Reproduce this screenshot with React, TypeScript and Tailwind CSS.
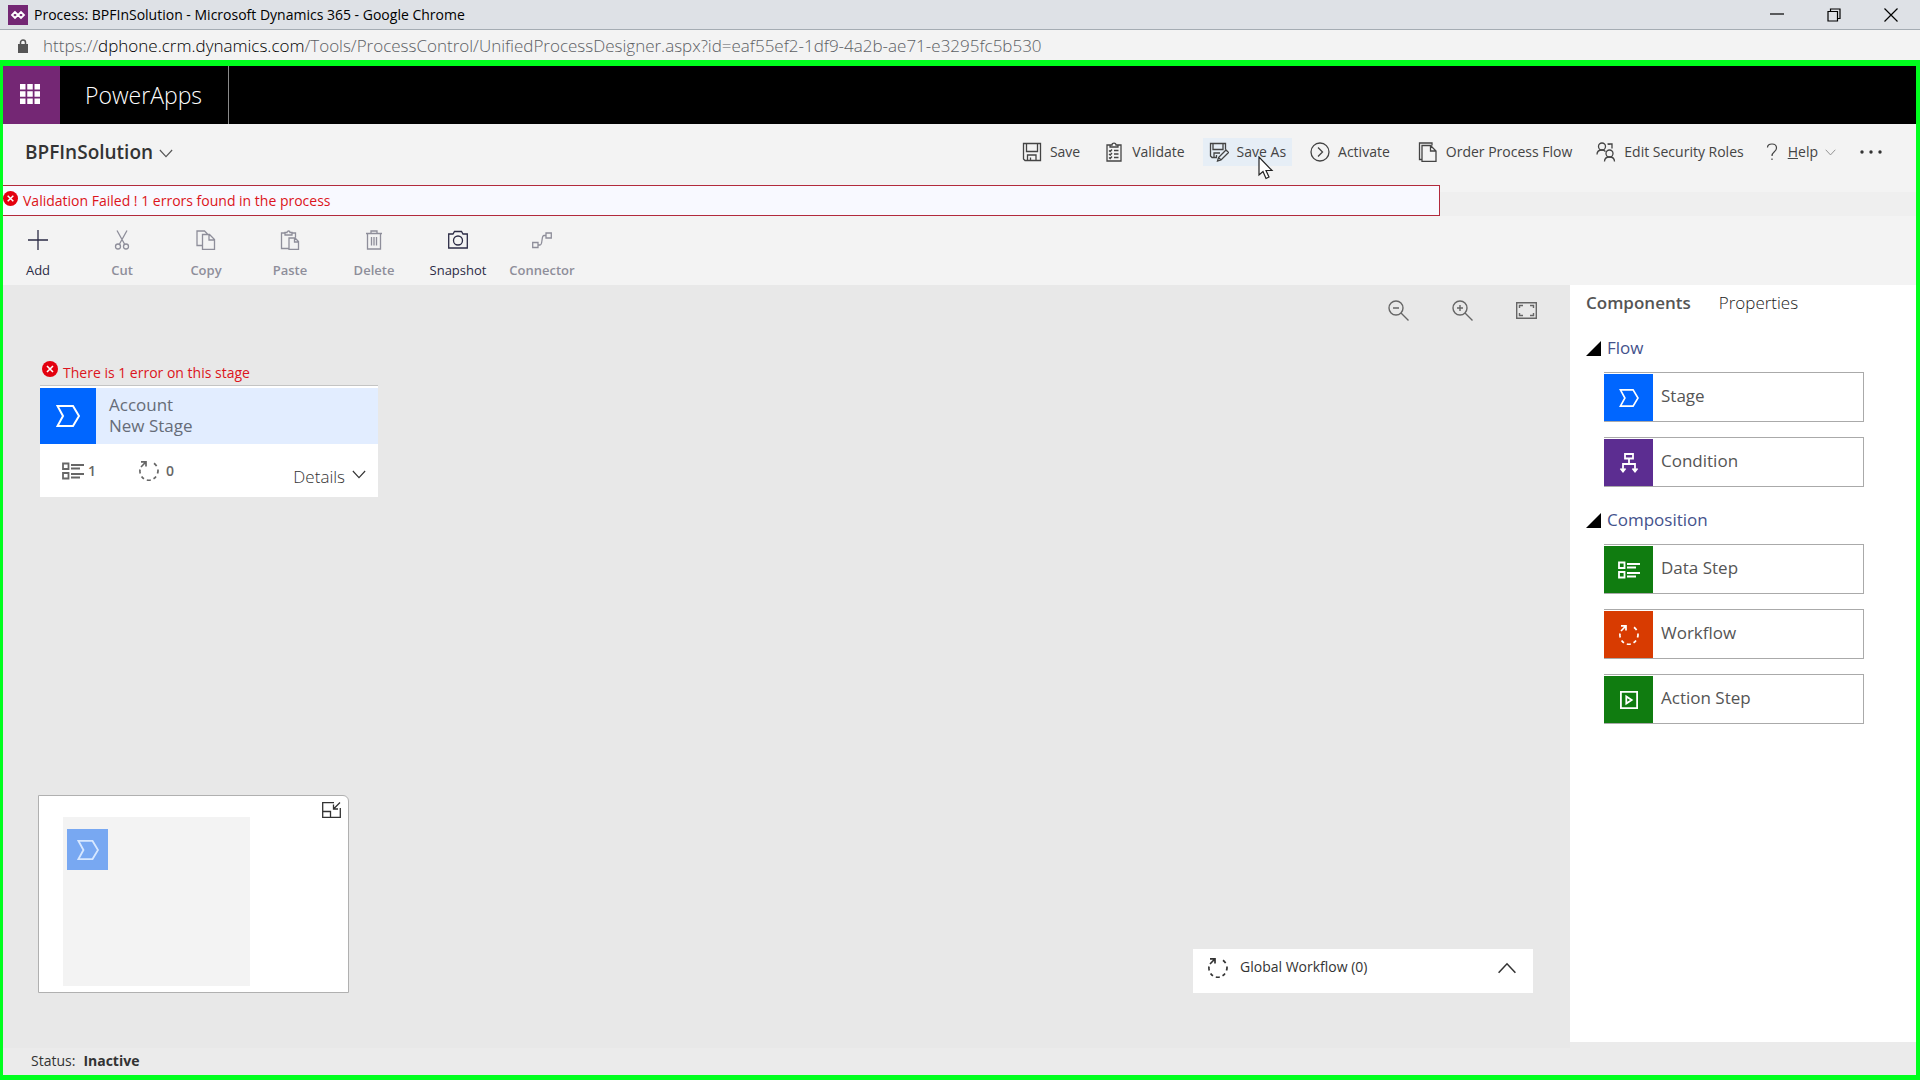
import type { ReactNode } from 'react'

type IconProps = { className?: string }

function StageIcon({ className }: IconProps) {
  return (
    <svg viewBox="0 0 24 22" className={className} fill="none" stroke="currentColor" strokeWidth="2">
      <path d="M1.5 1H17L23 11L17 21H1.5L7 11Z" />
    </svg>
  )
}

function ConditionIcon({ className }: IconProps) {
  return (
    <svg viewBox="0 0 20 20" className={className} fill="none" stroke="currentColor" strokeWidth="1.8">
      <path d="M6 1H14V5.500H6ZM10 5.500V11M4 18V11H16V18M1.500 15.500L4 18.500L6.500 15.500M13.500 15.500L16 18.500L18.500 15.500" />
    </svg>
  )
}

function DataStepIcon({ className }: IconProps) {
  return (
    <svg viewBox="0 0 22 18" className={className} fill="none" stroke="currentColor" strokeWidth="1.800">
      <path d="M1 1.500H6.500V7H1ZM1 11H6.500V16.500H1ZM9 3H22M9 6.500H18M9 12H22M9 15.500H18" />
    </svg>
  )
}

function WorkflowIcon({ className }: IconProps) {
  return (
    <svg viewBox="0 0 22 22" className={className} fill="none" stroke="currentColor" strokeWidth="1.7">
      <path d="M16 3.200A9 9 0 0 1 18.600 6.200M20 9.500A9 9 0 0 1 19.500 13.500M18 16.500A9 9 0 0 1 15.500 18.800M12.800 20A9 9 0 0 1 8.800 20M6 18.800A9 9 0 0 1 3.600 16.500M2.200 13.500A9 9 0 0 1 2 9.500M3 7L7.800 2M3 1.800H8V6.500" />
    </svg>
  )
}

function ActionStepIcon({ className }: IconProps) {
  return (
    <svg viewBox="0 0 20 20" className={className} fill="none" stroke="currentColor" strokeWidth="2">
      <path d="M1 1H19V19H1ZM7 6V14L13 10Z" />
    </svg>
  )
}

function ErrorIcon({ className }: IconProps) {
  return (
    <svg viewBox="0 0 16 16" className={className}>
      <circle cx="8" cy="8" r="8" fill="#e3000f" />
      <path d="M5 5L11 11M11 5L5 11" stroke="#fff" strokeWidth="1.600" />
    </svg>
  )
}

function Chevron({ className }: IconProps) {
  return (
    <svg viewBox="0 0 16 10" className={className} fill="none" stroke="currentColor" strokeWidth="1.300">
      <path d="M1 1L8 8.500L15 1" />
    </svg>
  )
}

// 20x20 line icon used by both command rows
function LineIcon({ children }: { children: ReactNode }) {
  return (
    <svg viewBox="0 0 20 20" className="size-5 shrink-0" fill="none" stroke="currentColor" strokeWidth="1.300">
      {children}
    </svg>
  )
}

function Pointer() {
  return (
    <svg viewBox="0 0 16 24" className="absolute left-[55px] top-[18px] z-10 h-6 w-4">
      <path d="M1 1V19L5 15.500L8 22.500L11 21L8 14.500H14Z" fill="#fff" stroke="#222" strokeWidth="1.200" />
    </svg>
  )
}

const commands = [
  {
    label: 'Save',
    className: 'mr-3',
    icon: <path d="M1.500 1.500H18.500V18.500H3L1.500 17ZM4.500 1.500V9.500H15.500V1.500M5.500 18.500V13H14V18.500M8.500 18V15.500" />,
  },
  {
    label: 'Validate',
    className: 'mr-3',
    icon: (
      <path d="M6 3H3V19H17V3H14M6 5V3H8C8 0.500 12 0.500 12 3H14V5ZM5 8.500L6.200 9.500L8 7.500M5 12L6.200 13L8 11M5 15.500L6.200 16.500L8 14.500M10 8.500H14.500M10 12H14.500M10 15.500H14.500" />
    ),
  },
  {
    label: 'Save As',
    className: 'mr-3 bg-[#e6eef6]',
    active: true,
    icon: (
      <path d="M8 15.500H3L1.500 14V1.500H16.500V7.500M4 1.500V7.500H14V1.500M5 15.500V11H11M7.500 15V13M8.500 19L9.500 15.500L17 8L19.500 10.500L12 18ZM9.500 15.500L12 18" />
    ),
  },
  {
    label: 'Activate',
    className: 'mr-4',
    icon: (
      <>
        <circle cx="10" cy="10" r="9" />
        <path d="M8 5.500L12.500 10L8 14.500" />
      </>
    ),
  },
  {
    label: 'Order Process Flow',
    className: 'mr-3',
    icon: <path d="M4 17.500H1.500V1H14V3.500M4 3.500H12.500L18 9V19.500H4ZM12.500 3.500V9H18" />,
  },
  {
    label: 'Edit Security Roles',
    className: 'mr-2',
    icon: (
      <>
        <circle cx="6" cy="4.500" r="3.500" />
        <circle cx="13.500" cy="11.500" r="3.500" />
        <path d="M1 12.500C1 9.500 3 8 6 8C7.500 8 8.500 8.500 9.500 9.500M8.500 19.500C8.500 16.500 10.500 15 13.500 15S18.500 16.500 18.500 19.500M11.500 2H16V6.500M13 3V2H11.500" />
      </>
    ),
  },
]

const tools = [
  { label: 'Add', enabled: true, icon: <path d="M10 0V20M0 10H20" /> },
  {
    label: 'Cut',
    enabled: false,
    icon: (
      <>
        <path d="M5 0.500L12.500 14M15 0.500L7.500 14" />
        <circle cx="6" cy="16.500" r="2.500" />
        <circle cx="14" cy="16.500" r="2.500" />
      </>
    ),
  },
  {
    label: 'Copy',
    enabled: false,
    icon: <path d="M6 15.500H1V1H8.500L11.500 4M6.500 4.500H13.500L18.500 9.500V19.500H6.500ZM13 4.500V10H18.500" />,
  },
  {
    label: 'Paste',
    enabled: false,
    icon: <path d="M8.500 18.500H1.500V3H5M12 3H15.500V7.500M5 5V2.500H7C7 0.500 10 0.500 10 2.500H12V5ZM9 8H15L18.500 11.500V19.500H9ZM14.500 8V12H18.500" />,
  },
  {
    label: 'Delete',
    enabled: false,
    icon: <path d="M2 3.500H18M7 3.500V1H13V3.500M3.500 3.500V19H16.500V3.500M7.500 7V15.500M10 7V15.500M12.500 7V15.500" />,
  },
  {
    label: 'Snapshot',
    enabled: true,
    icon: (
      <>
        <path d="M0.700 4H5L6.500 1.500H13.500L15 4H19.300V18H0.700Z" />
        <circle cx="10" cy="10.500" r="4.500" />
      </>
    ),
  },
  {
    label: 'Connector',
    enabled: false,
    icon: <path d="M0.700 12.500H6V17.500H0.700ZM14 3H19.300V8H14ZM6 15H8C11 15 9 5.500 12 5.500H14" />,
  },
]

const sections = [
  {
    title: 'Flow',
    items: [
      { label: 'Stage', color: 'bg-[#0066ff]', icon: <StageIcon className="h-[18px] w-5" /> },
      { label: 'Condition', color: 'bg-[#5c2d91]', icon: <ConditionIcon className="size-5" /> },
    ],
  },
  {
    title: 'Composition',
    items: [
      { label: 'Data Step', color: 'bg-[#107c10]', icon: <DataStepIcon className="h-[18px] w-[22px]" /> },
      { label: 'Workflow', color: 'bg-[#d83b01]', icon: <WorkflowIcon className="size-[22px]" /> },
      { label: 'Action Step', color: 'bg-[#107c10]', icon: <ActionStepIcon className="size-[18px]" /> },
    ],
  },
]

function BrowserChrome() {
  return (
    <div className="shrink-0">
      <div className="flex h-[30px] items-center border-b border-[#a5acb3] bg-[#dee1e6] pl-2 text-black">
        <svg viewBox="0 0 20 20" className="size-5">
          <rect width="20" height="20" fill="#742774" />
          <path d="M7 7L4 10L7 13L13 7L16 10L13 13Z" fill="none" stroke="#fff" strokeWidth="1.800" />
        </svg>
        <span className="ml-[6px] text-sm">Process: BPFInSolution - Microsoft Dynamics 365 - Google Chrome</span>
        <div className="ml-auto mr-[22px] flex gap-[43px]">
          <button aria-label="Minimize">
            <svg viewBox="0 0 14 14" className="size-[14px]" stroke="#000" strokeWidth="1.200">
              <path d="M0 6H14" />
            </svg>
          </button>
          <button aria-label="Restore">
            <svg viewBox="0 0 14 14" className="size-[14px]" fill="none" stroke="#000" strokeWidth="1.200">
              <path d="M1 3.500H10.500V13H1ZM3.500 3.500V1H13V10.500H10.500" />
            </svg>
          </button>
          <button aria-label="Close">
            <svg viewBox="0 0 14 14" className="size-[14px]" stroke="#000" strokeWidth="1.200">
              <path d="M0.500 0.500L13.500 13.500M13.500 0.500L0.500 13.500" />
            </svg>
          </button>
        </div>
      </div>
      <div className="flex h-[30px] items-center bg-[#f3f3f3] pl-[17px] pt-[2px]">
        <svg viewBox="0 0 12 14" className="h-[14px] w-3">
          <rect x="1" y="5" width="10" height="9" fill="#555" />
          <path d="M3.500 6V3.500A2.500 2.500 0 0 1 8.500 3.500V6" fill="none" stroke="#555" strokeWidth="1.500" />
        </svg>
        <span className="ml-[14px] text-[17px] font-light leading-6 text-[#5c6064]">
          https://<span className="text-black">dphone.crm.dynamics.com</span>
          /Tools/ProcessControl/UnifiedProcessDesigner.aspx?id=eaf55ef2-1df9-4a2b-ae71-e3295fc5b530
        </span>
      </div>
    </div>
  )
}

function AppHeader() {
  return (
    <header className="flex h-[58px] shrink-0 bg-black text-white">
      <button aria-label="App launcher" className="flex w-[57px] items-center justify-center bg-[#742774] pb-[2px] pr-[3px]">
        <svg viewBox="0 0 20 20" className="size-5" fill="#fff">
          <path d="M0 0H5.500V5.500H0ZM7.250 0H12.750V5.500H7.250ZM14.500 0H20V5.500H14.500ZM0 7.250H5.500V12.750H0ZM7.250 7.250H12.750V12.750H7.250ZM14.500 7.250H20V12.750H14.500ZM0 14.500H5.500V20H0ZM7.250 14.500H12.750V20H7.250ZM14.500 14.500H20V20H14.500Z" />
        </svg>
      </button>
      <a href="#" className="flex w-[169px] items-center border-r border-[#8a8a8a] pl-[25px] text-[23px] font-light">
        PowerApps
      </a>
    </header>
  )
}

function CommandBar() {
  return (
    <div className="flex h-[61px] shrink-0 items-center pb-[6px] pl-[22px] pr-[34px]">
      <button className="flex items-center gap-[6px]">
        <h1 className="text-[19px] font-semibold leading-6 text-[#333]">BPFInSolution</h1>
        <Chevron className="mt-1 h-[9px] w-[14px] text-[#555]" />
      </button>
      <div className="ml-auto flex items-center text-sm text-[#444]">
        {commands.map((c) => (
          <button key={c.label} className={`relative flex h-7 items-center gap-2 px-[6px] ${c.className}`}>
            <LineIcon>{c.icon}</LineIcon>
            {c.label}
            {c.active && <Pointer />}
          </button>
        ))}
        <button className="flex h-7 items-center px-[6px]">
          <svg viewBox="0 0 12 18" className="mx-[2px] h-[18px] w-3" fill="none" stroke="currentColor" strokeWidth="1.200">
            <path d="M1.500 4.500C1.500 2 3.500 1 6 1S10.500 2.500 10.500 5C10.500 9 6 8.500 6 13M6 15.500V17" />
          </svg>
          <span className="ml-2">
            <u>H</u>elp
          </span>
          <Chevron className="ml-[7px] mt-[2px] h-[7px] w-[11px] text-[#888]" />
        </button>
        <button aria-label="More commands" className="ml-[18px]">
          <svg viewBox="0 0 22 4" className="h-1 w-[22px]" fill="#333">
            <circle cx="2" cy="2" r="1.700" />
            <circle cx="11" cy="2" r="1.700" />
            <circle cx="20" cy="2" r="1.700" />
          </svg>
        </button>
      </div>
    </div>
  )
}

function StageCard() {
  return (
    <div className="absolute left-[37px] top-[76px] w-[338px]">
      <div className="flex h-6 items-start gap-[5px] pl-[2px] text-sm text-[#dc1420]">
        <ErrorIcon className="size-4" />
        <span className="leading-6">There is 1 error on this stage</span>
      </div>
      <div className="border-t border-[#c4c4c4] bg-white pt-[2px]">
        <div className="flex h-14 bg-[#e2edff]">
          <div className="flex w-14 items-center justify-center bg-[#0066ff] text-white">
            <StageIcon className="h-[22px] w-6" />
          </div>
          <div className="pl-[13px] pt-[6px] text-[17px] leading-[21px] text-[#666c78]">
            <div>Account</div>
            <div>New Stage</div>
          </div>
        </div>
        <div className="flex h-[53px] items-center pl-[22px] pr-3 text-sm font-semibold text-[#666]">
          <DataStepIcon className="h-[18px] w-[22px]" />
          <span className="ml-1 pt-px">1</span>
          <WorkflowIcon className="ml-[42px] size-[22px]" />
          <span className="ml-[6px] pt-px">0</span>
          <button className="ml-auto flex items-center gap-[7px] pt-3 text-[17px] font-light leading-5 text-[#333]">
            Details
            <Chevron className="mb-1 h-[9px] w-[14px]" />
          </button>
        </div>
      </div>
    </div>
  )
}

function Minimap() {
  return (
    <div className="absolute bottom-[55px] left-[35px] h-[198px] w-[311px] rounded-tr-md border border-[#b0b0b0] bg-white pl-6 pt-[21px]">
      <div className="h-[169px] w-[187px] bg-[#f3f3f3] pl-1 pt-3">
        <div className="flex size-[41px] items-center justify-center bg-[#78a8f2] text-[#d8e8ff]">
          <StageIcon className="h-5 w-[22px]" />
        </div>
      </div>
      <button aria-label="Collapse minimap" className="absolute right-[7px] top-[6px] text-[#333]">
        <svg viewBox="0 0 19 16" className="h-4 w-[19px]" fill="none" stroke="currentColor" strokeWidth="1.300">
          <path d="M12 0.700H0.700V15.300H18.300V6M0.700 9.500H8.500V15.300M18 0.500L12 6.500M11.500 2.500V7H16" />
        </svg>
      </button>
    </div>
  )
}

function Canvas() {
  return (
    <main className="relative min-w-0 flex-1 bg-[#e8e8e8]">
      <div className="absolute right-[33px] top-[15px] flex items-center gap-[43px] text-[#666]">
        <button aria-label="Zoom out">
          <svg viewBox="0 0 21 21" className="size-[21px]" fill="none" stroke="currentColor" strokeWidth="1.400">
            <circle cx="8" cy="8" r="7" />
            <path d="M13 13L20.500 20.500M5 8H11" />
          </svg>
        </button>
        <button aria-label="Zoom in">
          <svg viewBox="0 0 21 21" className="size-[21px]" fill="none" stroke="currentColor" strokeWidth="1.400">
            <circle cx="8" cy="8" r="7" />
            <path d="M13 13L20.500 20.500M5 8H11M8 5V11" />
          </svg>
        </button>
        <button aria-label="Fit to screen">
          <svg viewBox="0 0 21 17" className="h-[17px] w-[21px]" fill="none" stroke="currentColor" strokeWidth="1.400">
            <path d="M0.700 0.700H20.300V16.300H0.700ZM3.500 6V3.500H7M14 3.500H17.500V6M17.500 11V13.500H14M7 13.500H3.500V11" />
          </svg>
        </button>
      </div>
      <StageCard />
      <Minimap />
      <button className="absolute bottom-[55px] right-[37px] flex h-11 w-[340px] items-start bg-white pl-[14px] pr-4 pt-2 text-sm text-[#333]">
        <WorkflowIcon className="size-[22px]" />
        <span className="ml-[11px]">Global Workflow (0)</span>
        <Chevron className="ml-auto mt-[5px] h-3 w-5 rotate-180" />
      </button>
    </main>
  )
}

function ComponentsPanel() {
  return (
    <aside className="mb-[6px] w-[346px] shrink-0 bg-white pl-4 text-[17px] leading-6 text-[#555]">
      <div className="flex gap-7 pt-[6px]">
        <button className="font-semibold">Components</button>
        <button className="font-light text-[#222]">Properties</button>
      </div>
      {sections.map((s) => (
        <section key={s.title} className="pt-[21px]">
          <h2 className="flex items-center gap-[6px] text-[#44528c]">
            <svg viewBox="0 0 15 15" className="size-[15px]">
              <path d="M15 0V15H0Z" fill="#000" />
            </svg>
            {s.title}
          </h2>
          <div className="flex flex-col gap-[15px] pl-[18px] pt-3">
            {s.items.map((item) => (
              <button key={item.label} className="flex h-[50px] w-[260px] border border-l-0 border-[#aaa] pt-px text-left">
                <span className={`flex h-full w-[49px] items-center justify-center text-white ${item.color}`}>{item.icon}</span>
                <span className="pl-2 pt-[10px]">{item.label}</span>
              </button>
            ))}
          </div>
        </section>
      ))}
    </aside>
  )
}

export default function App() {
  return (
    <div className="flex h-screen flex-col font-['Open_Sans','Noto_Sans',sans-serif]">
      <BrowserChrome />
      <div className="flex min-h-0 flex-1 flex-col border-b-[5px] border-l-[3px] border-r-4 border-t-[6px] border-[#00ff1e] bg-[#f3f3f3]">
        <AppHeader />
        <CommandBar />
        <div className="flex shrink-0 items-stretch">
          <div role="alert" className="flex h-[31px] w-[calc(75%+2px)] items-center gap-[5px] border border-l-0 border-[#b22a3c] bg-[#f8f9ff] text-sm text-[#dc1420]">
            <ErrorIcon className="mb-1 size-[15px]" />
            Validation Failed ! 1 errors found in the process
          </div>
          <div className="mt-[7px] flex-1 bg-[#efefef]" />
        </div>
        <div className="-ml-[7px] flex h-[69px] shrink-0">
          {tools.map((t) => (
            <button
              key={t.label}
              disabled={!t.enabled}
              className={`flex w-[84px] shrink-0 flex-col items-center pt-[14px] text-[13px] leading-5 ${
                t.enabled ? 'text-[#2b2b45]' : 'font-semibold text-[#8e8e9a]'
              }`}
            >
              <LineIcon>{t.icon}</LineIcon>
              <span className="mt-[10px]">{t.label}</span>
            </button>
          ))}
        </div>
        <div className="flex min-h-0 flex-1 bg-[#ebebeb]">
          <Canvas />
          <ComponentsPanel />
        </div>
        <footer className="flex h-[27px] shrink-0 items-center gap-2 bg-[#ebebeb] pb-[2px] pl-7 text-sm text-[#333]">
          Status: <strong className="font-bold">Inactive</strong>
        </footer>
      </div>
    </div>
  )
}
